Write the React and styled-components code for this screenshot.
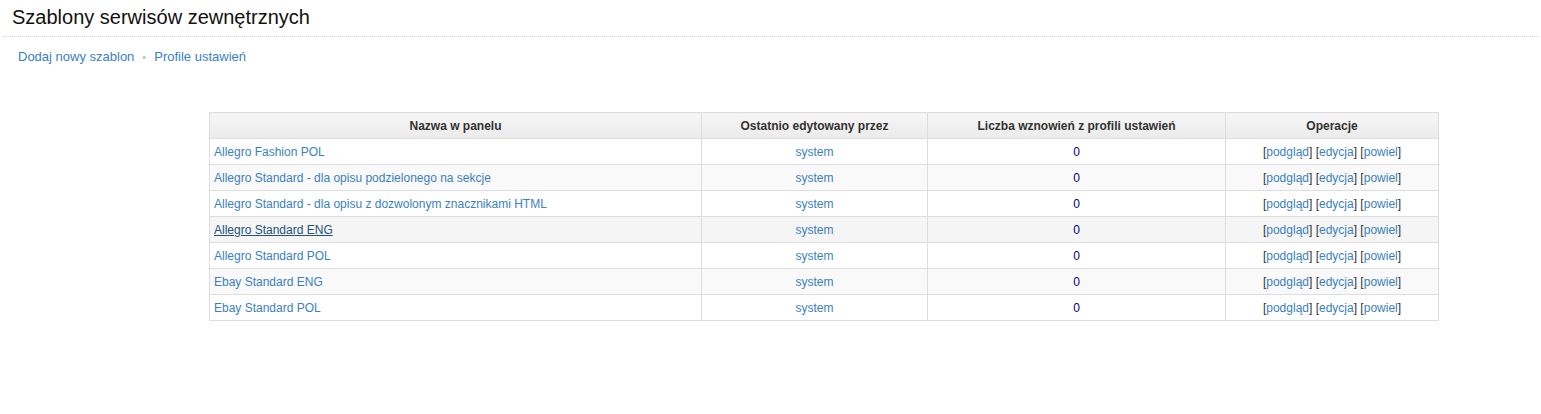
import React from "react";
import styled, { createGlobalStyle } from "styled-components";

const Global = createGlobalStyle`
  html, body { margin: 0; padding: 0; background: #fff; }
  body { font-family: "Liberation Sans", Arial, sans-serif; color: #333; }
`;

const Page = styled.div`
  padding: 0 2px 0 3px;
`;

const Title = styled.h1`
  margin: 0;
  padding: 5px 0 0 9px;
  height: 37px;
  box-sizing: border-box;
  font-size: 20px;
  font-weight: normal;
  color: #111;
  line-height: 24px;
  border-bottom: 1px dotted #d4d4d4;
`;

const Nav = styled.nav`
  display: flex;
  align-items: center;
  padding: 12px 0 0 15px;
  font-size: 13px;
  line-height: 16px;
`;

const NavLink = styled.a`
  color: #3a7fbf;
  text-decoration: none;
`;

const Dot = styled.span`
  color: #bbb;
  margin: 0 8px 0 8px;
  font-size: 11px;
`;

const TableWrap = styled.div`
  padding: 47px 0 0 206px;
`;

const Table = styled.table`
  border-collapse: collapse;
  width: 1229px;
  font-size: 12px;
  table-layout: fixed;
`;

const Th = styled.th`
  height: 26px;
  padding: 0 4px;
  box-sizing: border-box;
  border: 1px solid #ddd;
  background: linear-gradient(#f6f6f6, #ebebeb);
  color: #333;
  font-weight: bold;
  text-align: center;
`;

const Tr = styled.tr`
  background: ${(p) => (p.$hover ? "#f5f5f5" : p.$odd ? "#f9f9f9" : "#fff")};
`;

const Td = styled.td`
  height: 26px;
  padding: 0 4px;
  box-sizing: border-box;
  border: 1px solid #ddd;
  text-align: ${(p) => p.$align || "left"};
  color: ${(p) => p.$color || "#333"};
  white-space: nowrap;
`;

const Link = styled.a`
  color: ${(p) => (p.$hover ? "#23527c" : "#3a7fbf")};
  text-decoration: ${(p) => (p.$hover ? "underline" : "none")};
  cursor: pointer;
`;

const Ops = styled.span`
  color: #333;
`;

const rows = [
  "Allegro Fashion POL",
  "Allegro Standard - dla opisu podzielonego na sekcje",
  "Allegro Standard - dla opisu z dozwolonym znacznikami HTML",
  "Allegro Standard ENG",
  "Allegro Standard POL",
  "Ebay Standard ENG",
  "Ebay Standard POL",
];

export default function App() {
  return (
    <>
      <Global />
      <Page>
        <Title>Szablony serwisów zewnętrznych</Title>
        <Nav>
          <NavLink>Dodaj nowy szablon</NavLink>
          <Dot>•</Dot>
          <NavLink>Profile ustawień</NavLink>
        </Nav>
        <TableWrap>
          <Table>
            <colgroup>
              <col style={{ width: 492 }} />
              <col style={{ width: 226 }} />
              <col style={{ width: 298 }} />
              <col style={{ width: 213 }} />
            </colgroup>
            <thead>
              <tr>
                <Th>Nazwa w panelu</Th>
                <Th>Ostatnio edytowany przez</Th>
                <Th>Liczba wznowień z profili ustawień</Th>
                <Th>Operacje</Th>
              </tr>
            </thead>
            <tbody>
              {rows.map((name, i) => {
                const hover = i === 3;
                return (
                  <Tr key={name} $odd={i % 2 === 1} $hover={hover}>
                    <Td>
                      <Link $hover={hover}>{name}</Link>
                    </Td>
                    <Td $align="center">
                      <Link>system</Link>
                    </Td>
                    <Td $align="center" $color="#00007a">0</Td>
                    <Td $align="center">
                      <Ops>
                        [<Link>podgląd</Link>] [<Link>edycja</Link>] [
                        <Link>powiel</Link>]
                      </Ops>
                    </Td>
                  </Tr>
                );
              })}
            </tbody>
          </Table>
        </TableWrap>
      </Page>
    </>
  );
}
